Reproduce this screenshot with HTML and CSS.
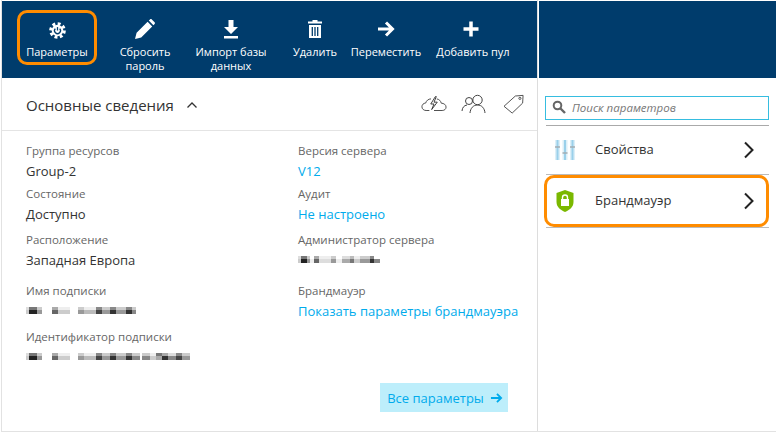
FILE: index.html
```html
<!DOCTYPE html>
<html lang="ru">
<head>
    <meta charset="UTF-8">
    <title>Параметры сервера</title>
    <link rel="stylesheet" href="styles.css">
</head>
<body>
<div class="blades">
    <section class="blade-main">
        <div class="toolbar">
            <div class="tool tool-active">
                <svg class="tool-icon" viewBox="0 0 20 20"><circle cx="10" cy="10" r="8" fill="none" stroke="#fff" stroke-width="3.600" stroke-dasharray="3.400 2.883"/><circle cx="10" cy="10" r="6.800" fill="#fff"/><path d="M7.400 7.800a3.500 3.500 0 1 0 5.200 0" fill="none" stroke="#003c6c" stroke-width="1.500"/><path d="M10 6v4" stroke="#003c6c" stroke-width="1.500"/></svg>
                <span>Параметры</span>
            </div>
            <div class="tool tool-reset">
                <svg class="tool-icon" viewBox="0 0 20 20"><path d="M0 20l1.600-6.200L12.600 2.800l4.600 4.600L6.200 18.400z M13.800 1.600l1.200-1.200c.6-.5 1.300-.5 1.800 0l2.800 2.800c.5.500.5 1.200 0 1.800l-1.200 1.200z" fill="#fff"/></svg>
                <span>Сбросить<br>пароль</span>
            </div>
            <div class="tool tool-import">
                <svg class="tool-icon" viewBox="0 0 20 20"><path d="M7.500 1h5v7h4.500l-7 7-7-7h4.500z M3 17h14v2.500H3z" fill="#fff"/></svg>
                <span>Импорт базы<br>данных</span>
            </div>
            <div class="tool tool-delete">
                <svg class="tool-icon" viewBox="0 0 20 20"><path d="M7.500 1h5v1.500h4.500v2H3v-2h4.500z M4 6h12v13H4z" fill="#fff"/><path d="M7.300 8v9M10 8v9M12.700 8v9" stroke="#003c6c" stroke-width="1.300"/></svg>
                <span>Удалить</span>
            </div>
            <div class="tool tool-move">
                <svg class="tool-icon" viewBox="0 0 20 20"><path d="M2 10h14M10 3.500l6.500 6.500-6.500 6.500" fill="none" stroke="#fff" stroke-width="3"/></svg>
                <span>Переместить</span>
            </div>
            <div class="tool tool-add">
                <svg class="tool-icon" viewBox="0 0 20 20"><path d="M10 2.500v15M2.500 10h15" stroke="#fff" stroke-width="3.500"/></svg>
                <span>Добавить пул</span>
            </div>
        </div>

        <div class="essentials-head">
            <h2>Основные сведения</h2>
            <svg class="collapse" viewBox="0 0 12 8"><path d="M1.500 6.500L6 2l4.500 4.500" fill="none" stroke="#333" stroke-width="1.300"/></svg>
            <div class="head-icons">
                <svg class="head-icon" viewBox="0 0 28 20"><path d="M9 17H5.500C3 17 1 15.300 1 13c0-2.200 1.700-4 4-4 .8-2.700 3-4.500 5.800-4.500 M17 4.500c2.500.4 4.300 2.200 4.800 4.600 2.800.1 5.200 1.700 5.200 4.200 0 2.200-1.800 3.700-4.200 3.700H14" fill="none" stroke="#444" stroke-width="1"/><path d="M15.500 2l-5 8h3.500l-2.500 6 6-8h-3.500l2.500-6z" fill="none" stroke="#333" stroke-width="1"/></svg>
                <svg class="head-icon" viewBox="0 0 26 20"><circle cx="8" cy="7" r="3.500" fill="none" stroke="#444"/><circle cx="16.500" cy="6" r="4.700" fill="none" stroke="#444"/><path d="M1 17c.3-3.400 2-5.600 5-6 M9 19c.4-4.700 3.200-8 7.500-8s7.100 3.300 7.500 8" fill="none" stroke="#444"/></svg>
                <svg class="head-icon" viewBox="0 0 24 22"><path d="M1 13.500L13.500 2.200 22 1.500l-.5 8.500L10 21z" fill="none" stroke="#444"/><circle cx="18.500" cy="4.800" r="1.200" fill="none" stroke="#444"/></svg>
            </div>
        </div>

        <div class="props">
            <div class="prop">
                <label>Группа ресурсов</label>
                <div class="value">Group-2</div>
            </div>
            <div class="prop">
                <label>Версия сервера</label>
                <div class="value link">V12</div>
            </div>
            <div class="prop">
                <label>Состояние</label>
                <div class="value">Доступно</div>
            </div>
            <div class="prop">
                <label>Аудит</label>
                <div class="value link">Не настроено</div>
            </div>
            <div class="prop">
                <label>Расположение</label>
                <div class="value">Западная Европа</div>
            </div>
            <div class="prop">
                <label>Администратор сервера</label>
                <div class="blur blur-admin"></div>
            </div>
            <div class="prop">
                <label>Имя подписки</label>
                <div class="blur blur-sub"></div>
            </div>
            <div class="prop">
                <label>Брандмауэр</label>
                <div class="value link">Показать параметры брандмауэра</div>
            </div>
            <div class="prop">
                <label>Идентификатор подписки</label>
                <div class="blur blur-id"></div>
            </div>
        </div>

        <div class="actions">
            <div class="all-settings">Все параметры
                <svg class="all-arrow" viewBox="0 0 14 12"><path d="M1 6h11M7.500 1.500L12 6l-4.500 4.500" fill="none" stroke="#00abec" stroke-width="2"/></svg>
            </div>
        </div>
    </section>

    <aside class="blade-side">
        <div class="side-top"></div>
        <div class="search">
            <svg class="search-icon" viewBox="0 0 14 14"><circle cx="5.500" cy="5.500" r="3.800" fill="none" stroke="#666" stroke-width="2"/><path d="M8.500 8.500l4.500 4.500" stroke="#666" stroke-width="2.400"/></svg>
            <span>Поиск параметров</span>
        </div>
        <div class="menu">
            <div class="menu-row">
                <svg class="menu-icon" viewBox="0 0 22 22"><path d="M1 1h5v20H1zM8.500 1h5v20h-5zM16 1h5v20h-5z" fill="#dceff8"/><path d="M3.500 1v20M11 1v20M18.500 1v20" stroke="#9ad0ea" stroke-width="2"/><path d="M1 8h5M8.500 14h5M16 8h5" stroke="#a3adb3" stroke-width="1.300"/></svg>
                <span class="menu-label">Свойства</span>
                <svg class="chevron" viewBox="0 0 12 18"><path d="M2 1.500L9.500 9 2 16.500" fill="none" stroke="#222" stroke-width="2"/></svg>
            </div>
            <div class="menu-row menu-row-active">
                <svg class="menu-icon" viewBox="0 0 22 22"><path d="M11 0l8.500 3v9c0 5-4 8-8.500 10-4.500-2-8.500-5-8.500-10V3z" fill="#7ab800"/><path d="M7 9h8v7H7z" fill="#fff"/><path d="M8.500 9V7.500a2.500 2.500 0 0 1 5 0V9" fill="none" stroke="#fff" stroke-width="1.400"/></svg>
                <span class="menu-label">Брандмауэр</span>
                <svg class="chevron" viewBox="0 0 12 18"><path d="M2 1.500L9.500 9 2 16.500" fill="none" stroke="#222" stroke-width="2"/></svg>
            </div>
        </div>
    </aside>
</div>
</body>
</html>
```

FILE: styles.css
```css
html, body {
    margin: 0;
    padding: 0;
}

body {
    background-color: #fff;
    color: #333;
    font-family: "Open Sans", "Noto Sans", sans-serif;
    width: 777px;
    height: 433px;
    overflow: hidden;
}

.blades {
    display: flex;
    width: 775px;
    height: 432px;
    margin-left: 1px;
    border-bottom: 1px solid #e2e2e2;
    box-sizing: border-box;
}

.blade-main {
    width: 537px;
    border-left: 1px solid #e2e2e2;
    border-right: 1px solid #ddd;
    box-sizing: border-box;
    position: relative;
}

/* barra superior */
.toolbar {
    display: flex;
    background-color: #003c6c;
    height: 77px;
    padding-left: 15px;
    box-sizing: border-box;
    color: #fff;
    font-size: 11px;
    line-height: 14px;
    margin-top: 1px;
}

.tool {
    display: flex;
    flex-direction: column;
    align-items: center;
    text-align: center;
    padding-top: 18px;
    flex: none;
    white-space: nowrap;
    box-sizing: border-box;
}

.tool-icon {
    width: 20px;
    height: 20px;
    margin-bottom: 6px;
}

.tool-active {
    width: 80px;
    height: 55px;
    margin-top: 9px;
    padding-top: 9px;
    border: 3px solid #ff8c00;
    border-radius: 10px;
}

.tool-active .tool-icon {
    width: 17px;
    height: 17px;
    margin-bottom: 6px;
}

.tool-reset { width: 78px; margin-left: 9px; }
.tool-import { width: 76px; margin-left: 9px; }
.tool-delete { width: 50px; margin-left: 21px; }
.tool-move { width: 72px; margin-left: 10px; }
.tool-add { width: 76px; margin-left: 13px; }
.tool-add .tool-icon { margin-right: 5px; }

.essentials-head {
    display: flex;
    align-items: center;
    height: 53px;
    padding-left: 24px;
    border-bottom: 1px solid #e4e4e4;
    box-sizing: border-box;
}

.essentials-head h2 {
    margin: 2px 0 0;
    font-size: 15px;
    font-weight: 400;
    color: #333;
}

.collapse {
    width: 12px;
    height: 8px;
    margin: 2px 0 0 12px;
}

.head-icons {
    display: flex;
    align-items: center;
    margin-left: auto;
    gap: 14px;
    padding-right: 10px;
}

.head-icon {
    width: 26px;
    height: 20px;
}

/* datos */
.props {
    display: grid;
    grid-template-columns: 272px 1fr;
    grid-template-rows: 43px 46px 51px 46px 46px;
    padding: 12px 0 0 24px;
}

.prop label {
    display: block;
    font-size: 11.500px;
    line-height: 16px;
    color: #666;
}

.value {
    font-size: 13px;
    line-height: 20px;
    margin-top: 2px;
    color: #333;
    white-space: nowrap;
}

.link {
    color: #00abec;
}

.blur {
    height: 7px;
    margin-top: 8px;
    background-repeat: no-repeat;
    background-size: 100% 3px, 100% 4px;
    background-position: 0 0, 0 3px;
}

.blur-admin {
    width: 84px;
    background-image:
        linear-gradient(90deg, #ddd 0 3px, #777 3px 9px, #ccc 9px 12px, #fff 12px 16px, #aaa 16px 21px, #eee 21px 33px, #ccc 33px 38px, #fff 38px 44px, #ddd 44px 52px, #bbb 52px 56px, #eee 56px 62px, #ccc 62px 72px, #888 72px 76px, #fff 76px 84px),
        linear-gradient(90deg, #ccc 0 3px, #222 3px 9px, #999 9px 12px, #eee 12px 16px, #666 16px 21px, #ddd 21px 33px, #999 33px 38px, #eee 38px 44px, #aaa 44px 52px, #777 52px 56px, #ccc 56px 62px, #999 62px 72px, #333 72px 76px, #888 76px 82px, #fff 82px 84px);
}

.blur-sub {
    width: 110px;
    background-image:
        linear-gradient(90deg, #ddd 0 3px, #777 3px 11px, #ccc 11px 16px, #fff 16px 26px, #aaa 26px 32px, #eee 32px 44px, #fff 44px 52px, #ccc 52px 58px, #eee 58px 70px, #888 70px 76px, #ccc 76px 84px, #888 84px 90px, #ccc 90px 100px, #888 100px 106px, #ccc 106px 110px),
        linear-gradient(90deg, #ccc 0 3px, #222 3px 11px, #999 11px 16px, #fff 16px 26px, #666 26px 32px, #ccc 32px 44px, #fff 44px 52px, #999 52px 58px, #bbb 58px 70px, #444 70px 76px, #999 76px 84px, #333 84px 90px, #999 90px 100px, #333 100px 106px, #888 106px 110px);
}

.blur-id {
    width: 164px;
    background-image:
        linear-gradient(90deg, #ddd 0 3px, #777 3px 11px, #ccc 11px 16px, #fff 16px 26px, #aaa 26px 32px, #eee 32px 44px, #fff 44px 52px, #ccc 52px 58px, #eee 58px 70px, #888 70px 76px, #ccc 76px 84px, #888 84px 90px, #ccc 90px 100px, #888 100px 106px, #ccc 106px 114px, #fff 114px 116px, #ccc 116px 124px, #eee 124px 130px, #777 130px 136px, #aaa 136px 142px, #ddd 142px 150px, #888 150px 156px, #ccc 156px 164px),
        linear-gradient(90deg, #ccc 0 3px, #222 3px 11px, #999 11px 16px, #fff 16px 26px, #666 26px 32px, #ccc 32px 44px, #fff 44px 52px, #999 52px 58px, #bbb 58px 70px, #444 70px 76px, #999 76px 84px, #333 84px 90px, #999 90px 100px, #333 100px 106px, #888 106px 114px, #fff 114px 116px, #888 116px 124px, #ccc 124px 130px, #aaa 130px 136px, #333 136px 142px, #888 142px 150px, #444 150px 156px, #999 156px 164px);
}

.actions {
    position: absolute;
    right: 29px;
    top: 383px;
}

.all-settings {
    display: flex;
    align-items: center;
    justify-content: center;
    gap: 6px;
    width: 128px;
    height: 29px;
    padding-left: 2px;
    box-sizing: border-box;
    background-color: #bdeefb;
    color: #00abec;
    font-size: 13px;
}

.all-arrow {
    width: 13px;
    height: 12px;
}

/* panel derecho */
.blade-side {
    flex: 1;
    margin-left: 1px;
}

.side-top {
    background-color: #003c6c;
    height: 77px;
    margin-top: 1px;
}

.search {
    display: flex;
    align-items: center;
    gap: 6px;
    width: 224px;
    height: 24px;
    margin: 18px 0 0 6px;
    padding-left: 6px;
    border: 1px solid #36bde0;
    box-sizing: border-box;
    font-size: 11.500px;
    font-style: italic;
    color: #777;
    padding-bottom: 2px;
}

.search-icon {
    width: 14px;
    height: 14px;
}

.menu {
    width: 223px;
    margin: 5px 0 0 7px;
    border-top: 1px solid #aaa;
}

.menu-row {
    display: flex;
    align-items: center;
    height: 48px;
    padding-left: 8px;
    padding-right: 12px;
    border-bottom: 1px solid #bbb;
    position: relative;
}

.menu-row .menu-label {
    margin-bottom: 2px;
}

.menu-icon {
    width: 22px;
    height: 22px;
    flex: none;
}

.menu-label {
    font-size: 13px;
    color: #333;
    margin-left: 19px;
}

.chevron {
    width: 12px;
    height: 18px;
    margin-left: auto;
    margin-right: 2px;
}

.menu-row-active {
    height: 52px;
}

/* marco naranja encima de la fila */
.menu-row-active::after {
    content: "";
    position: absolute;
    left: -2px;
    right: 0;
    top: 0;
    bottom: 0;
    border: 3px solid #ff8c00;
    border-radius: 10px;
}
```
